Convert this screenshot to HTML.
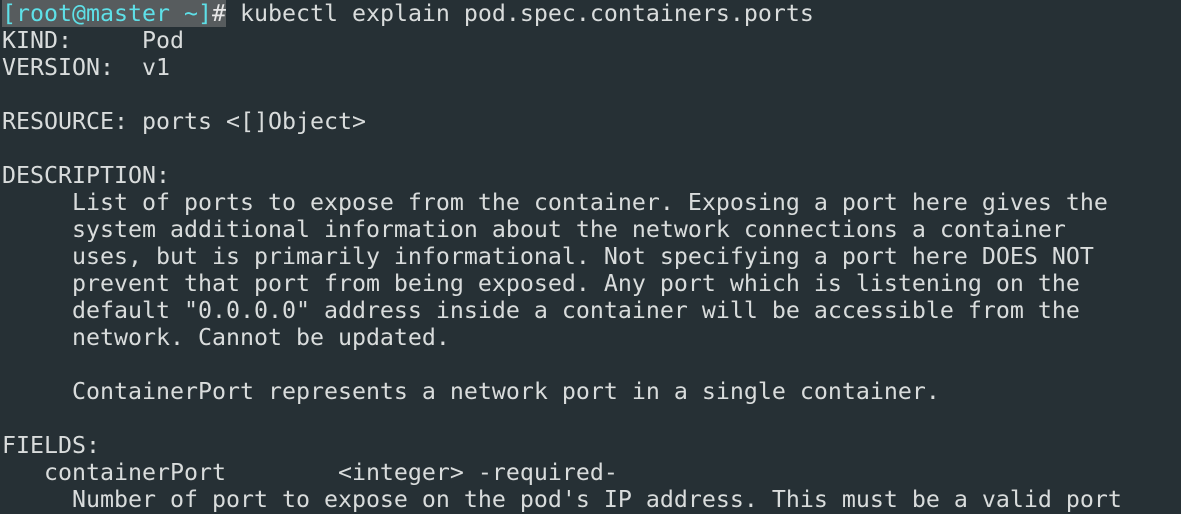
<!DOCTYPE html>
<html><head><style>
html,body{margin:0;padding:0;background:#263035;width:1181px;height:514px;overflow:hidden}
pre{margin:0;padding:0 0 0 2px;font-family:"DejaVu Sans Mono","Liberation Mono",monospace;font-size:23.25px;line-height:27px;color:#d9dcdc;white-space:pre}
.p{background:#575c5e;color:#5ee0e8}
.h{background:#575c5e;color:#e8e8e8}
</style></head><body><pre><span class="p">[root@master ~]</span><span class="h">#</span> kubectl explain pod.spec.containers.ports
KIND:     Pod
VERSION:  v1

RESOURCE: ports &lt;[]Object&gt;

DESCRIPTION:
     List of ports to expose from the container. Exposing a port here gives the
     system additional information about the network connections a container
     uses, but is primarily informational. Not specifying a port here DOES NOT
     prevent that port from being exposed. Any port which is listening on the
     default "0.0.0.0" address inside a container will be accessible from the
     network. Cannot be updated.

     ContainerPort represents a network port in a single container.

FIELDS:
   containerPort        &lt;integer&gt; -required-
     Number of port to expose on the pod's IP address. This must be a valid port
</pre></body></html>
